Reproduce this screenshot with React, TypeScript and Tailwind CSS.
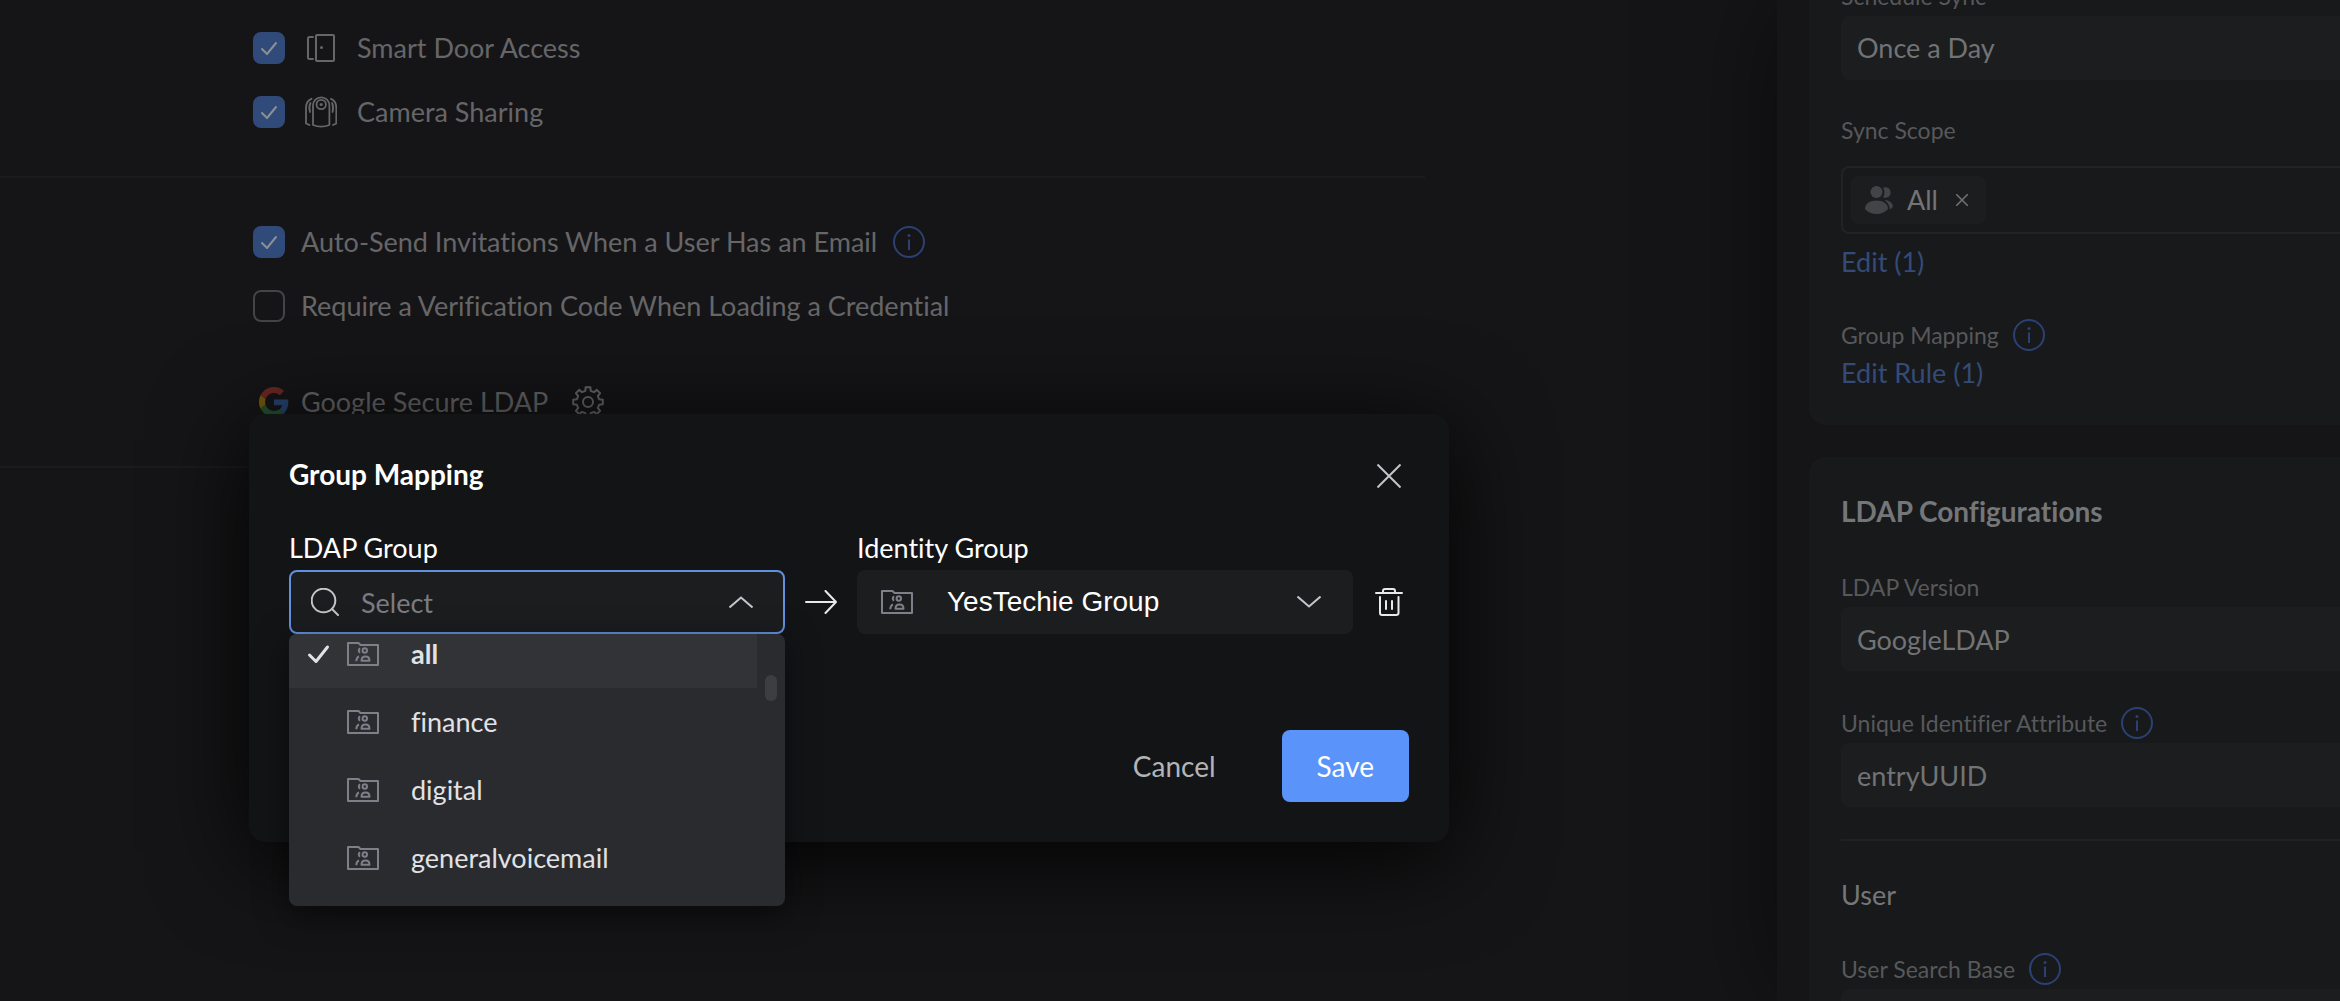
import type { ReactNode } from "react";

const LDAP_GROUPS = ["all", "finance", "digital", "generalvoicemail"];

function gearPath(teeth: number, outer: number, inner: number) {
  const points: string[] = [];
  const step = (Math.PI * 2) / teeth;
  for (let i = 0; i < teeth; i++) {
    const mid = i * step - Math.PI / 2;
    const corners = [
      [inner, -0.3],
      [outer, -0.2],
      [outer, 0.2],
      [inner, 0.3],
    ];
    for (const [r, offset] of corners) {
      const a = mid + offset * step;
      points.push(`${(16 + r * Math.cos(a)).toFixed(2)} ${(16 + r * Math.sin(a)).toFixed(2)}`);
    }
  }
  return `M${points.join("L")}Z`;
}

function DoorIcon() {
  return (
    <svg className="h-8 w-8" viewBox="0 0 32 32" fill="none" stroke="currentColor" strokeWidth="2" strokeLinecap="round" strokeLinejoin="round" aria-hidden="true">
      <path d="M8 5H4.500Q3 5 3 6.500V25.500Q3 27 4.500 27H8" />
      <rect x="11" y="3" width="18" height="26" rx="1" />
      <circle cx="16.500" cy="15.500" r="1.500" fill="currentColor" stroke="none" />
    </svg>
  );
}

function CameraIcon() {
  return (
    <svg className="h-8 w-8" viewBox="0 0 32 32" fill="none" stroke="currentColor" strokeWidth="1.800" strokeLinecap="round" strokeLinejoin="round" aria-hidden="true">
      <path d="M8 9.500a8.200 8.200 0 0 1 16.400 0V29Q16.200 32.200 8 29Z" />
      <circle cx="16.200" cy="8.500" r="4.700" />
      <circle cx="16.200" cy="8.500" r="1.600" fill="currentColor" stroke="none" />
      <path d="M6.500 2.800Q1 5 1 12V27.500L4.500 29M26 2.800Q31.300 5 31.300 12V27.500L28 29" />
      <path d="M5.500 7Q3.500 11 5 16M27 7Q29 11 27.500 16" />
    </svg>
  );
}

function GoogleIcon() {
  return (
    <svg className="h-[30px] w-[30px] opacity-40" viewBox="0 0 48 48" aria-hidden="true">
      <path fill="#EA4335" d="M24 9.500c3.540 0 6.710 1.220 9.210 3.600l6.850-6.850C35.900 2.380 30.470 0 24 0 14.620 0 6.510 5.380 2.560 13.220l7.980 6.190C12.430 13.720 17.740 9.500 24 9.500z" />
      <path fill="#4285F4" d="M46.980 24.550c0-1.570-.15-3.090-.38-4.550H24v9.020h12.940c-.58 2.960-2.260 5.480-4.780 7.180l7.730 6c4.510-4.180 7.090-10.360 7.090-17.650z" />
      <path fill="#FBBC05" d="M10.530 28.590c-.48-1.450-.76-2.990-.76-4.590s.27-3.140.76-4.590l-7.980-6.190C.92 16.460 0 20.120 0 24c0 3.880.92 7.540 2.560 10.780l7.970-6.190z" />
      <path fill="#34A853" d="M24 48c6.480 0 11.930-2.130 15.890-5.810l-7.730-6c-2.150 1.450-4.920 2.300-8.160 2.300-6.260 0-11.570-4.220-13.470-9.910l-7.980 6.190C6.510 42.620 14.620 48 24 48z" />
    </svg>
  );
}

function GearIcon() {
  return (
    <svg className="h-8 w-8" viewBox="0 0 32 32" fill="none" stroke="currentColor" strokeWidth="2" strokeLinejoin="round" aria-hidden="true">
      <path d={gearPath(8, 15, 11.5)} />
      <circle cx="16" cy="16" r="5" />
    </svg>
  );
}

function FolderIcon() {
  return (
    <svg className="h-6 w-8 shrink-0 text-[#7d8088]" viewBox="0 0 32 24" fill="none" stroke="currentColor" strokeWidth="2" strokeLinejoin="round" aria-hidden="true">
      <path d="M1 23V1H11.500L13.500 3H31V23Z" />
      <circle cx="17.800" cy="8.500" r="2.200" />
      <path d="M13 6.200Q10.500 8.500 13 10.800" />
      <path d="M14.500 18.800Q14.500 14.500 18.500 14.500T22.500 18.800Z" />
      <path d="M12 14.500Q9.500 15.200 9.300 19.300" />
    </svg>
  );
}

function UsersIcon() {
  return (
    <svg className="h-7 w-7 text-[#434447]" viewBox="0 0 28 28" fill="currentColor" aria-hidden="true">
      <circle cx="11.500" cy="6" r="6" />
      <path d="M0 23C0 17.500 5 14.500 11.500 14.500S23 17.500 23 23C20 26.500 16 28 11.500 28S3 26.500 0 23Z" />
      <path d="M18 1.800A5.300 5.300 0 1 1 18 11.300Q21 6.500 18 1.800Z" />
      <path d="M19.500 14Q27 14.500 28 20.500Q27 22.500 24.600 23.300Q24.500 17.500 19.500 14Z" />
    </svg>
  );
}

function InfoButton({ label }: { label: string }) {
  return (
    <button type="button" aria-label={label} className="shrink-0 text-[#2b4173]">
      <svg className="h-8 w-8" viewBox="0 0 32 32" fill="none" stroke="currentColor" strokeWidth="2" aria-hidden="true">
        <circle cx="16" cy="16" r="15" />
        <path d="M16 13.500V24" />
        <circle cx="16" cy="9.500" r="1.500" fill="currentColor" stroke="none" />
      </svg>
    </button>
  );
}

function CheckRow({ id, icon, label, checked, children }: {
  id: string;
  icon?: ReactNode;
  label: string;
  checked?: boolean;
  children?: ReactNode;
}) {
  return (
    <div className="flex h-8 items-center">
      <span className="grid h-8 w-8 shrink-0">
        <input
          id={id}
          type="checkbox"
          defaultChecked={checked}
          className="peer col-start-1 row-start-1 h-8 w-8 appearance-none rounded-lg border-2 border-[#434447] checked:border-[#304a79] checked:bg-[#304a79]"
        />
        <svg className="pointer-events-none invisible col-start-1 row-start-1 h-8 w-8 peer-checked:visible" viewBox="0 0 32 32" fill="none" stroke="#8b8f96" strokeWidth="2" strokeLinecap="round" strokeLinejoin="round" aria-hidden="true">
          <path d="M9 17L14 22L23 11" />
        </svg>
      </span>
      {icon && <span className="ml-5 shrink-0">{icon}</span>}
      <label htmlFor={id} className={icon ? "ml-5" : "ml-4"}>
        {label}
      </label>
      {children}
    </div>
  );
}

function FieldLabel({ htmlFor, text, info }: { htmlFor?: string; text: string; info?: boolean }) {
  return (
    <div className="flex h-8 items-center gap-[14px] text-[23px] text-[#57585a]">
      {htmlFor ? <label htmlFor={htmlFor}>{text}</label> : <span>{text}</span>}
      {info && <InfoButton label={`About ${text}`} />}
    </div>
  );
}

function TextField({ id, value }: { id: string; value: string }) {
  return (
    <input
      id={id}
      defaultValue={value}
      className="mt-1 block h-16 w-full rounded-l-lg bg-[#1c1d1f] px-4 text-[#727375] outline-none"
    />
  );
}

function AccessSettings() {
  return (
    <main className="min-w-0 flex-1 pr-[352px] text-[#666668]">
      <section className="flex flex-col gap-8 border-b-2 border-[#1a1b1d] pt-8 pb-12 pl-[253px]">
        <CheckRow id="door" icon={<DoorIcon />} label="Smart Door Access" checked />
        <CheckRow id="camera" icon={<CameraIcon />} label="Camera Sharing" checked />
      </section>
      <section className="border-b-2 border-[#1a1b1d] py-12 pl-[253px]">
        <div className="flex flex-col gap-8">
          <CheckRow id="invite" label="Auto-Send Invitations When a User Has an Email" checked>
            <span className="ml-4 flex">
              <InfoButton label="About invitations" />
            </span>
          </CheckRow>
          <CheckRow id="verify" label="Require a Verification Code When Loading a Credential" />
        </div>
        <div className="mt-16 flex h-8 items-center pl-1.5">
          <GoogleIcon />
          <span className="ml-3">Google Secure LDAP</span>
          <button type="button" aria-label="Google Secure LDAP settings" className="ml-6">
            <GearIcon />
          </button>
        </div>
      </section>
    </main>
  );
}

function LdapPanel() {
  return (
    <aside className="w-[563px] shrink-0 bg-[#151517] pl-8 shadow-[0_0_100px_rgba(0,0,0,0.5)]">
      {/* Panel is scrolled part of the way down */}
      <div className="-mt-5 flex flex-col gap-8">
        <section className="rounded-bl-2xl bg-[#18191b] pb-[34px] pl-8">
          <FieldLabel htmlFor="schedule" text="Schedule Sync" />
          <select id="schedule" className="mt-1 block h-16 w-full appearance-none rounded-l-lg bg-[#1c1d1f] px-4 text-[#727375] outline-none">
            <option>Once a Day</option>
          </select>

          <div className="mt-[34px]">
            <FieldLabel text="Sync Scope" />
          </div>
          <div className="mt-5 flex h-[68px] items-center rounded-l-lg border-2 border-r-0 border-[#222325] pl-2">
            <div className="flex h-12 items-center rounded-lg bg-[#1c1d1f] px-[14px] text-[#727375]">
              <UsersIcon />
              <span className="ml-[14px]">All</span>
              <button type="button" aria-label="Remove All" className="mr-1 ml-[18px]">
                <svg className="h-3 w-3" viewBox="0 0 12 12" stroke="currentColor" strokeWidth="1.500" aria-hidden="true">
                  <path d="M0 0L12 12M12 0L0 12" />
                </svg>
              </button>
            </div>
          </div>
          <a href="#scope" className="mt-[10px] block w-fit leading-9 text-[#344b77]">Edit (1)</a>

          <div className="mt-[39px]">
            <FieldLabel text="Group Mapping" info />
          </div>
          <a href="#rules" className="mt-1 block w-fit leading-9 text-[#344b77]">Edit Rule (1)</a>
        </section>

        <section className="rounded-tl-2xl bg-[#18191b] pt-[34px] pl-8">
          <h2 className="text-[28px] leading-10 font-bold text-[#757678]">LDAP Configurations</h2>
          <div className="mt-10">
            <FieldLabel htmlFor="version" text="LDAP Version" />
            <TextField id="version" value="GoogleLDAP" />
          </div>
          <div className="mt-9">
            <FieldLabel htmlFor="uid" text="Unique Identifier Attribute" info />
            <TextField id="uid" value="entryUUID" />
          </div>
          <h3 className="mt-8 border-t-2 border-[#202123] pt-8 leading-11 text-[#757678]">User</h3>
          <div className="mt-9">
            <FieldLabel htmlFor="base" text="User Search Base" info />
            <TextField id="base" value="" />
          </div>
        </section>
      </div>
    </aside>
  );
}

function GroupMappingDialog() {
  return (
    <div
      role="dialog"
      aria-labelledby="dialog-title"
      className="w-[1200px] rounded-2xl bg-[#131416] px-10 pt-10 pb-10 text-white shadow-[0_16px_96px_rgba(0,0,0,0.9)]"
    >
      <div className="flex items-center justify-between">
        <h1 id="dialog-title" className="text-[28px] leading-10 font-bold">Group Mapping</h1>
        <button type="button" aria-label="Close" className="mt-1 mr-2 text-[#c4c5c8]">
          <svg className="h-6 w-6" viewBox="0 0 24 24" stroke="currentColor" strokeWidth="2" aria-hidden="true">
            <path d="M0.500 0.500L23.500 23.500M23.500 0.500L0.500 23.500" />
          </svg>
        </button>
      </div>

      <div className="mt-9 flex items-end">
        <div className="relative w-[496px]">
          <label htmlFor="ldap-group" className="block leading-9">LDAP Group</label>
          <div className="mt-1 flex h-16 items-center rounded-lg border-2 border-[#628fdf] bg-[#1c1d1f] pr-[30px] pl-5">
            <svg className="h-7 w-7 shrink-0 text-[#c4c5c8]" viewBox="0 0 28 28" fill="none" stroke="currentColor" strokeWidth="2" strokeLinecap="round" aria-hidden="true">
              <circle cx="12.500" cy="12.500" r="11.800" />
              <path d="M21 21L27 27" />
            </svg>
            <input
              id="ldap-group"
              placeholder="Select"
              className="ml-[22px] h-full min-w-0 flex-1 bg-transparent outline-none placeholder:text-[#7a7c82]"
            />
            <svg className="h-3 w-6 shrink-0 text-[#c4c5c8]" viewBox="0 0 24 12" fill="none" stroke="currentColor" strokeWidth="2" aria-hidden="true">
              <path d="M0.500 11.500L12 1.500L23.500 11.500" />
            </svg>
          </div>

          {/* Open list, scrolled so that the first row is cut */}
          <div className="absolute inset-x-0 top-full flex h-[272px] overflow-hidden rounded-lg bg-[#2a2b2f] shadow-[0_8px_32px_rgba(0,0,0,0.5)]">
            <ul role="listbox" aria-label="LDAP Group" className="-mt-[14px] flex-1 text-[#e1e2e5]">
              {LDAP_GROUPS.map((group, i) => (
                <li
                  key={group}
                  role="option"
                  aria-selected={i === 0}
                  className="flex h-[68px] items-center pl-[18px] aria-selected:bg-[#323337] aria-selected:font-bold"
                >
                  <span className="w-10 shrink-0">
                    {i === 0 && (
                      <svg className="h-6 w-6" viewBox="0 0 24 24" fill="none" stroke="currentColor" strokeWidth="3" strokeLinecap="round" strokeLinejoin="round" aria-hidden="true">
                        <path d="M2.500 13L9 19.500L20.500 5" />
                      </svg>
                    )}
                  </span>
                  <FolderIcon />
                  <span className="ml-8">{group}</span>
                </li>
              ))}
            </ul>
            <div className="w-7 pt-[41px] pl-2">
              <div className="h-[26px] w-3 rounded-full bg-[#3d3e42]" />
            </div>
          </div>
        </div>

        <svg className="mx-5 mb-5 h-6 w-8 shrink-0" viewBox="0 0 32 24" fill="none" stroke="#e8e9eb" strokeWidth="2" strokeLinecap="round" strokeLinejoin="round" aria-hidden="true">
          <path d="M1 12H31M20.500 1L31 12L20.500 23" />
        </svg>

        <div className="w-[496px]">
          <span id="identity-label" className="block leading-9">Identity Group</span>
          <button
            type="button"
            aria-haspopup="listbox"
            aria-labelledby="identity-label identity-value"
            className="mt-1 flex h-16 w-full items-center rounded-lg bg-[#1c1d1f] pr-8 pl-6 text-left"
          >
            <FolderIcon />
            <span id="identity-value" className="ml-[34px] flex-1 font-['Liberation_Sans',sans-serif] text-[28px]">YesTechie Group</span>
            <svg className="h-3 w-6 shrink-0 text-[#c4c5c8]" viewBox="0 0 24 12" fill="none" stroke="currentColor" strokeWidth="2" aria-hidden="true">
              <path d="M0.500 0.500L12 10.500L23.500 0.500" />
            </svg>
          </button>
        </div>

        <button type="button" aria-label="Delete rule" className="mb-[18px] ml-[22px]">
          <svg className="h-7 w-7" viewBox="0 0 28 28" fill="none" stroke="#e8e9eb" strokeWidth="2" strokeLinecap="round" strokeLinejoin="round" aria-hidden="true">
            <path d="M1 5H27M8 5V3Q8 1 10 1H18Q20 1 20 3V5M5 9V25Q5 27 7 27H21Q23.500 27 23.500 25V9M11 13V21M17 13V21" />
          </svg>
        </button>
      </div>

      <div className="mt-24 flex items-center justify-end text-[28px]">
        <button type="button" className="px-8 leading-9 text-[#b3b4b7]">Cancel</button>
        <button type="button" className="ml-[34px] h-[72px] rounded-lg bg-[#5a94fa] px-[35px]">Save</button>
      </div>
    </div>
  );
}

export default function App() {
  return (
    <div className="relative flex h-screen overflow-hidden bg-[#151517] font-[Lato,sans-serif] text-[27px] [font-variant-ligatures:no-common-ligatures]">
      <AccessSettings />
      <LdapPanel />
      <div className="absolute inset-0 pt-[414px] pl-[249px]">
        <GroupMappingDialog />
      </div>
    </div>
  );
}
